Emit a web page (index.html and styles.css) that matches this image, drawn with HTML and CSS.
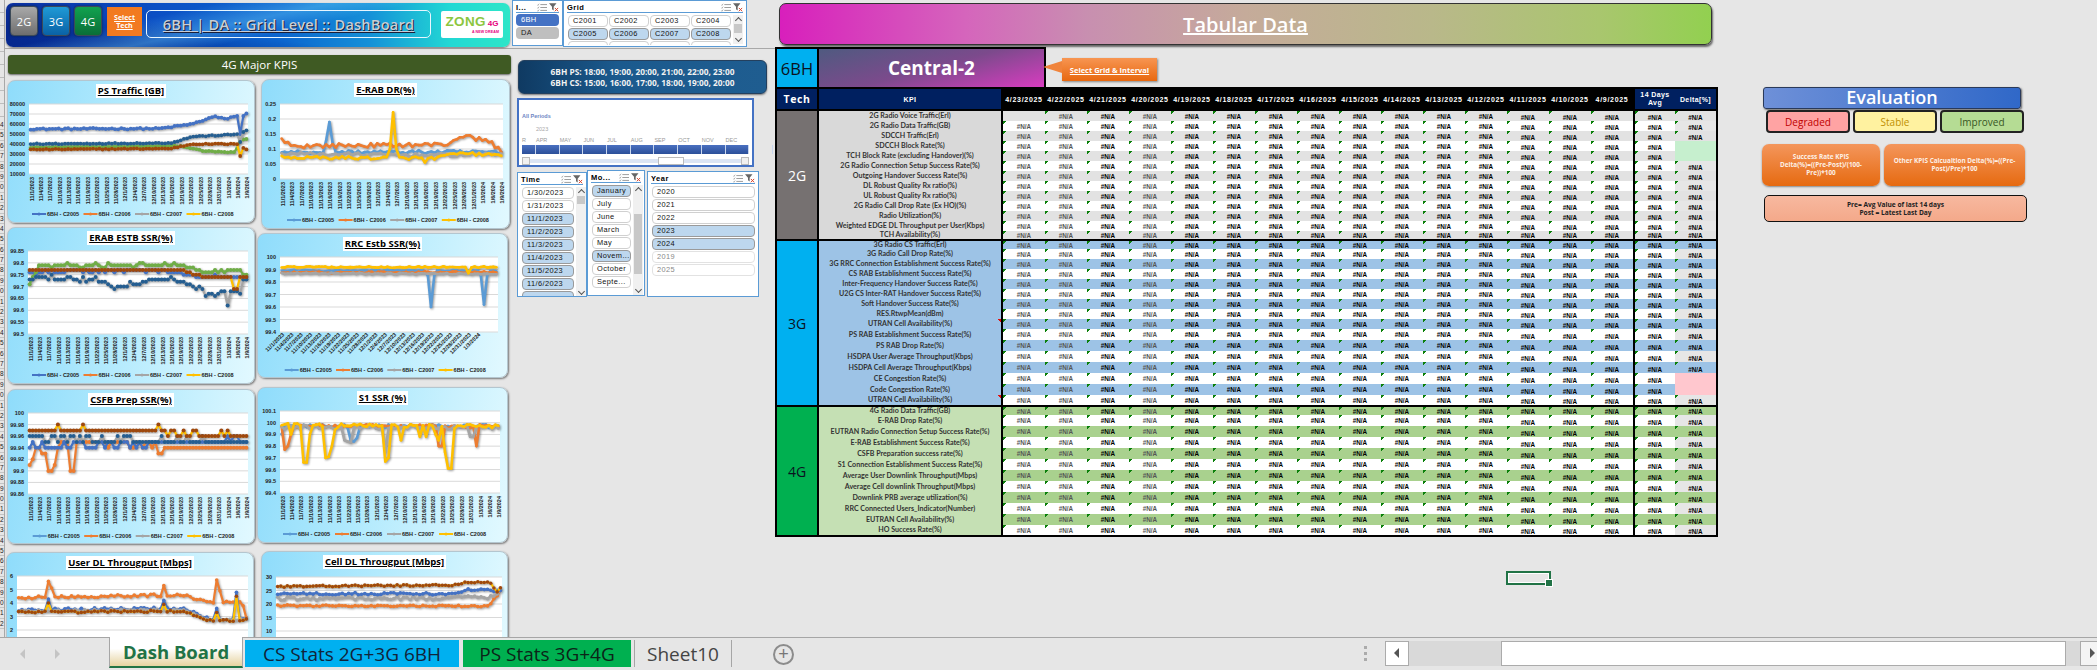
FILE: index.html
```html
<!DOCTYPE html>
<html lang="en">
<head>
<meta charset="utf-8">
<title>6BH | DA :: Grid Level :: DashBoard</title>
<link rel="stylesheet" href="styles.css">
</head>
<body>
<svg class="defs" width="0" height="0" aria-hidden="true">
  <symbol id="i-multi" viewBox="0 0 12 10">
    <path d="M4 1.5h8M4 5h8M4 8.5h8" stroke="#8a8a8a" stroke-width="1" fill="none"/>
    <path d="M0 1.5l1 1 1.6-2M0 5l1 1 1.6-2M0 8.5l1 1 1.6-2" stroke="#8a8a8a" stroke-width=".8" fill="none"/>
  </symbol>
  <symbol id="i-clear" viewBox="0 0 12 10">
    <path d="M0 0h9L5.6 4v4.5L3.6 7V4z" fill="#666"/>
    <path d="M7 5.5l4 4M11 5.5l-4 4" stroke="#d8442a" stroke-width="1.2" fill="none"/>
  </symbol>
</svg>
<div class="app">
  <div class="sheet">
    <div class="rowhead" id="rowhead"></div>
    <div class="content">
      <div class="top">
        <div class="top-left">
          <div class="banner">
            <span class="tech-btn t2">2G</span>
            <span class="tech-btn t3">3G</span>
            <span class="tech-btn t4">4G</span>
            <span class="select-tech">Select<br>Tech</span>
            <div class="banner-title"><span>6BH | DA :: Grid Level :: DashBoard</span></div>
            <div class="logo"><div class="logo-main"><span class="zong">ZONG</span><span class="z4g">4G</span></div><div class="dream">A NEW DREAM</div></div>
          </div>
          <section class="slicer s-i">
            <header class="sl-head"><span class="sl-name">I...</span><svg class="ic"><use href="#i-multi"/></svg><svg class="ic"><use href="#i-clear"/></svg></header>
            <div class="sl-stack">
              <span class="pill pill-on">6BH</span>
              <span class="pill pill-off">DA</span>
            </div>
          </section>
          <section class="slicer s-grid">
            <header class="sl-head"><span class="sl-name">Grid</span><svg class="ic"><use href="#i-multi"/></svg><svg class="ic"><use href="#i-clear"/></svg></header>
            <div class="sl-body">
              <div class="grid-btns">
                <span class="btn">C2001</span><span class="btn">C2002</span><span class="btn">C2003</span><span class="btn">C2004</span>
                <span class="btn on">C2005</span><span class="btn on">C2006</span><span class="btn on">C2007</span><span class="btn on">C2008</span>
                <span class="btn"></span><span class="btn"></span><span class="btn"></span><span class="btn"></span>
              </div>
              <div class="sl-scroll sc-grid"><i class="chev up"></i><b class="thumb"></b><i class="chev dn"></i></div>
            </div>
          </section>
        </div>
        <div class="tabular"><span>Tabular Data</span></div>
      </div>
      <div class="main">
        <div class="left">
          <div class="kpi-bar">4G Major KPIS</div>
          <div class="charts">
            <div class="col-a">
              <article class="card c1"><h3 class="card-title">PS Traffic [GB]</h3><svg class="plot" id="ch1"></svg></article>
              <article class="card c3"><h3 class="card-title">ERAB ESTB SSR(%)</h3><svg class="plot" id="ch3"></svg></article>
              <article class="card c5"><h3 class="card-title">CSFB Prep SSR(%)</h3><svg class="plot" id="ch5"></svg></article>
              <article class="card c7"><h3 class="card-title">User DL Througput [Mbps]</h3><svg class="plot" id="ch7"></svg></article>
            </div>
            <div class="col-b">
              <article class="card c2"><h3 class="card-title">E-RAB DR(%)</h3><svg class="plot" id="ch2"></svg></article>
              <article class="card c4"><h3 class="card-title">RRC Estb SSR(%)</h3><svg class="plot" id="ch4"></svg></article>
              <article class="card c6"><h3 class="card-title">S1 SSR (%)</h3><svg class="plot" id="ch6"></svg></article>
              <article class="card c8"><h3 class="card-title">Cell DL Througput [Mbps]</h3><svg class="plot" id="ch8"></svg></article>
            </div>
          </div>
        </div>
        <div class="filters">
          <div class="info">6BH PS: 18:00, 19:00, 20:00, 21:00, 22:00, 23:00<br>6BH CS: 15:00, 16:00, 17:00, 18:00, 19:00, 20:00</div>
          <div class="timeline">
            <div class="tl-all">All Periods</div>
            <div class="tl-year">2023</div>
            <div class="tl-months"><span class="m-r">R</span><span>APR</span><span>MAY</span><span>JUN</span><span>JUL</span><span>AUG</span><span>SEP</span><span>OCT</span><span>NOV</span><span>DEC</span></div>
            <div class="tl-bar"><i class="m-r"></i><i></i><i></i><i></i><i></i><i></i><i></i><i></i><i></i><i></i><i></i></div>
            <div class="tl-scroll"><b class="tl-arrow l"></b><span class="tl-track"><b class="tl-thumb"></b></span><b class="tl-arrow r"></b></div>
          </div>
          <div class="slicer-row">
            <section class="slicer s-time">
              <header class="sl-head"><span class="sl-name">Time</span><svg class="ic"><use href="#i-multi"/></svg><svg class="ic"><use href="#i-clear"/></svg></header>
              <div class="sl-body">
                <div class="sl-list">
                  <span class="btn">1/30/2023</span><span class="btn">1/31/2023</span><span class="btn on">11/1/2023</span><span class="btn on">11/2/2023</span><span class="btn on">11/3/2023</span><span class="btn on">11/4/2023</span><span class="btn on">11/5/2023</span><span class="btn on">11/6/2023</span><span class="btn on"></span>
                </div>
                <div class="sl-scroll sc-time"><i class="chev up"></i><b class="thumb"></b><i class="chev dn"></i></div>
              </div>
            </section>
            <section class="slicer s-month">
              <header class="sl-head"><span class="sl-name">Mo...</span><svg class="ic"><use href="#i-multi"/></svg><svg class="ic"><use href="#i-clear"/></svg></header>
              <div class="sl-body">
                <div class="sl-list">
                  <span class="btn on">January</span><span class="btn">July</span><span class="btn">June</span><span class="btn">March</span><span class="btn">May</span><span class="btn on">Novem...</span><span class="btn">October</span><span class="btn">Septe...</span>
                </div>
                <div class="sl-scroll sc-month"><i class="chev up"></i><b class="thumb"></b><i class="chev dn"></i></div>
              </div>
            </section>
            <section class="slicer s-year">
              <header class="sl-head"><span class="sl-name">Year</span><svg class="ic"><use href="#i-multi"/></svg><svg class="ic"><use href="#i-clear"/></svg></header>
              <div class="sl-list">
                <span class="btn">2020</span><span class="btn">2021</span><span class="btn">2022</span><span class="btn on">2023</span><span class="btn on">2024</span><span class="btn off">2019</span><span class="btn off">2025</span>
              </div>
            </section>
          </div>
        </div>
        <div class="report">
          <div class="report-top">
            <div class="cell-6bh">6BH</div>
            <div class="cell-region">Central-2</div>
            <div class="callout"><span>Select Grid &amp; Interval</span></div>
          </div>
          <div class="grid-wrap">
            <table class="kpi-table">
              <colgroup><col class="w-tech"><col class="w-kpi"><col class="w-d" span="15"><col class="w-avg"><col class="w-delta"></colgroup>
              <thead id="thead"></thead>
              <tbody id="tbody"></tbody>
            </table>
          </div>
        </div>
        <aside class="eval">
          <div class="eval-title">Evaluation</div>
          <div class="eval-legend">
            <span class="lg lg-bad">Degraded</span>
            <span class="lg lg-mid">Stable</span>
            <span class="lg lg-good">Improved</span>
          </div>
          <div class="eval-orange">
            <div class="note-o no-a">Success Rate KPIS<br>Delta(%)=((Pre-Post)/(100-<br>Pre))*100</div>
            <div class="note-o no-b">Other KPIS Calcualtion Delta(%)=((Pre-<br>Post)/Pre)*100</div>
          </div>
          <div class="eval-peach">Pre= Avg Value of last 14 days<br>Post = Latest Last Day</div>
        </aside>
      </div>
    </div>
    <div class="sel-cell"></div>
  </div>
  <footer class="tabbar">
    <div class="tab-nav"><i class="tri tl"></i><i class="tri tr"></i></div>
    <div class="tab tab-dash">Dash Board</div>
    <div class="tab tab-cs">CS Stats 2G+3G 6BH</div>
    <div class="tab tab-ps">PS Stats 3G+4G</div>
    <div class="tab tab-s10">Sheet10</div>
    <div class="tab-add">+</div>
    <div class="hscroll">
      <span class="grip"><i></i><i></i><i></i></span>
      <span class="hs-btn"><i class="tri tl dark"></i></span>
      <span class="hs-track"><b class="hs-thumb"></b></span>
      <span class="hs-btn hs-end"><i class="tri tr dark"></i></span>
    </div>
  </footer>
</div>
<script src="script.js"></script>
</body>
</html>
```
FILE: styles.css
```css
* { box-sizing: border-box; }
html, body { margin: 0; padding: 0; }
body { width: 2097px; height: 670px; overflow: hidden; background: #e6e6e6; font-family: "Open Sans", "Liberation Sans", sans-serif; }
.defs { position: absolute; }
.app { width: 2097px; height: 670px; display: flex; flex-direction: column; overflow: hidden; }
.sheet { position: relative; height: 637px; display: flex; overflow: hidden; }

/* row headers */
.rowhead { width: 5px; flex: none; border-right: 1px solid #a8a8a8; overflow: hidden; }
.rh-top { height: 120px; background: repeating-linear-gradient(#e6e6e6 0 12px, #bdbdbd 12px 13px); }
.rh { height: 10.4px; font: 6.5px/10px "Liberation Sans", sans-serif; color: #222; border-bottom: 1px solid #c4c4c4; overflow: hidden; }

.content { flex: 1; min-width: 0; display: flex; flex-direction: column; }
.top { height: 49px; flex: none; display: flex; }
.top-left { width: 770px; height: 49px; display: flex; align-items: flex-start; border-bottom: 1px solid #a8a8a8; flex: none; }

/* banner */
.banner { width: 504px; height: 44px; margin: 3px 0 0 1px; display: flex; align-items: flex-start; border-radius: 7px; flex: none; position: relative; overflow: hidden;
  background:
    linear-gradient(168deg, rgba(255,255,255,0) 30%, rgba(120,220,255,.35) 46%, rgba(255,255,255,0) 58%),
    linear-gradient(8deg, rgba(0,30,120,.45) 0 18%, rgba(0,30,120,0) 40%),
    linear-gradient(90deg, #0a2fa0 0, #0b4fc4 30%, #0c66cf 55%, #1590d8 72%, #22d8d4 88%, #2ee6c8 100%);
  box-shadow: 0 1px 2px #777; }
.tech-btn { width: 28px; height: 30px; margin-top: 3px; border-radius: 4px; display: flex; align-items: center; justify-content: center; color: #fff; font-size: 11px; border: 1px solid #3c4a58; box-shadow: 0 0 2px #123; }
.t2 { margin-left: 4px; background: linear-gradient(180deg, #a9a9a9, #6e6e6e); }
.t3 { margin-left: 4px; background: linear-gradient(180deg, #1f9ad6, #0a62a6); }
.t4 { margin-left: 4px; background: linear-gradient(180deg, #11a24f, #0a6e38); }
.select-tech { width: 35px; height: 29px; margin: 4px 0 0 5px; background: #f27a20; color: #fff; font-size: 7px; line-height: 8px; font-weight: 700; text-decoration: underline; text-align: center; display: flex; align-items: center; justify-content: center; }
.banner-title { width: 285px; height: 28px; margin: 7px 0 0 4px; border: 1px solid #e8f6ff; border-radius: 5px; display: flex; align-items: center; justify-content: center; color: #c9ced6; font-size: 14.6px; font-weight: 600; letter-spacing: .2px; }
.banner-title span { text-decoration: underline; text-shadow: 1px 1px 0 #1a1f3a; }
.logo { width: 62px; height: 27px; margin: 8px 0 0 10px; background: #fff; border-radius: 2px; display: flex; flex-direction: column; align-items: center; justify-content: center; }
.logo-main { display: flex; align-items: baseline; line-height: 13px; }
.zong { color: #8cc63f; font: 700 13.5px/13px "Liberation Sans", sans-serif; letter-spacing: .3px; }
.z4g { color: #e6007e; font: 700 8px/13px "Liberation Sans", sans-serif; margin-left: 2px; }
.dream { color: #e6007e; font: 700 3.6px/5px "Liberation Sans", sans-serif; letter-spacing: .1px; align-self: flex-end; margin-right: 4px; }

/* slicers */
.slicer { background: #fff; border: 1px solid #5b9bd5; flex: none; overflow: hidden; font-family: "Liberation Sans", sans-serif; }
.s-i { width: 51px; height: 46px; margin-left: 2px; }
.s-grid { width: 184px; height: 47px; margin-left: 0; }
.sl-head { height: 12px; margin: 0 3px; padding-top: 1px; display: flex; align-items: center; border-bottom: 1px solid #5b9bd5; }
.sl-name { flex: 1; font-size: 7.5px; font-weight: 700; letter-spacing: .5px; color: #000; white-space: nowrap; }
.ic { width: 10px; height: 9px; margin-left: 2px; flex: none; }
.sl-stack { display: flex; flex-direction: column; gap: 1px; padding: 1px 3px; }
.pill { height: 12px; border-radius: 4px; font-size: 7.5px; line-height: 12px; padding-left: 5px; letter-spacing: .3px; }
.pill-on { background: #4472c4; color: #fff; }
.pill-off { background: #bfbfbf; color: #222; }
.sl-body { display: flex; }
.grid-btns { display: grid; grid-template-columns: repeat(4, 40px); gap: 1px; padding: 2px 0 0 4px; height: 32px; overflow: hidden; align-content: start; }
.btn { height: 12px; border: 1px solid #d0d0d0; border-radius: 4px; background: #fff; font-size: 7.4px; line-height: 10px; padding-left: 4px; color: #111; letter-spacing: .4px; white-space: nowrap; overflow: hidden; flex: none; }
.btn.on { background: #bdd7ee; border-color: #9a9a9a; }
.btn.off { color: #888; border-color: #e2e2e2; }
.sl-list { display: flex; flex-direction: column; gap: 1px; padding: 2px 0 0 4px; overflow: hidden; }
.sl-scroll { width: 10px; margin: 2px 0 0 2px; background: #f0f0f0; display: flex; flex-direction: column; align-items: center; flex: none; position: relative; }
.thumb { background: #c8c8c8; width: 8px; display: block; }
.chev { width: 5px; height: 5px; display: block; border-left: 1.5px solid #555; border-top: 1.5px solid #555; flex: none; }
.chev.up { transform: rotate(45deg); margin-top: 3px; }
.chev.dn { transform: rotate(225deg); margin-top: auto; margin-bottom: 3px; }
.sc-grid { height: 29px; }
.sc-grid .thumb { height: 9px; margin-top: 1px; }
.sc-time { height: 110px; }
.sc-time .thumb { height: 8px; margin-top: 1px; }
.sc-month { height: 110px; }
.sc-month .thumb { height: 60px; margin-top: 21px; }

/* title bar */
.tabular { width: 933px; height: 42px; margin: 3px 0 0 4px; border-radius: 7px; border: 1px solid #333; box-shadow: 1px 2px 2px #666; display: flex; align-items: center; justify-content: center; color: #fff; font-size: 20px; font-weight: 600; flex: none;
  background: linear-gradient(90deg, #d81fbc 0, #d565bc 20%, #c88fb0 33%, #c5ab9a 50%, #b9b88a 70%, #a9c66e 88%, #92d050 100%); }
.tabular span { text-decoration: underline; }

.main { flex: 1; display: flex; min-height: 0; align-items: flex-start; }

/* left */
.left { width: 507px; flex: none; }
.kpi-bar { width: 503px; height: 19px; margin: 6px 0 0 3px; background: #3f5a23; border-radius: 3px; color: #fff; font-size: 11.5px; display: flex; align-items: center; justify-content: center; box-shadow: 0 1px 2px #666; }
.charts { display: flex; margin-top: 5px; }
.col-a { width: 252px; padding: 1px 0 0 2px; flex: none; }
.col-b { flex: 1; min-width: 0; }
.card { position: relative; border: 1px solid #b4c6cf; border-radius: 8px; overflow: hidden; display: flex; flex-direction: column; align-items: center; padding-top: 3px; box-shadow: 1px 1px 2px #777;
  background: linear-gradient(100deg, #8fdcfb 0, #b2eafd 45%, #e2f9ff 100%); }
.card-title { margin: 0; height: 14px; padding: 0 2px; background: #fff; color: #000; font-size: 9.5px; line-height: 14px; font-weight: 700; text-decoration: underline; white-space: nowrap; flex: none; }
.plot { display: block; flex: none; }
.c1 { width: 248px; height: 143px; }
.c3 { width: 248px; height: 157px; margin-top: 4px; }
.c5 { width: 248px; height: 155px; margin-top: 5px; }
.c7 { width: 248px; height: 95px; margin: 8px 0 0 -1px; }
.c2 { width: 249px; height: 150px; margin-left: 4px; }
.c4 { width: 251px; height: 145px; margin-top: 4px; }
.c6 { width: 251px; height: 156px; margin-top: 9px; }
.c8 { width: 247px; height: 95px; margin: 8px 0 0 4px; }
.plot text { font-family: "Liberation Sans", sans-serif; font-size: 5.5px; font-weight: 700; fill: #222; }
.plot .lines { filter: drop-shadow(1px 1px .8px rgba(0,0,0,.4)); }

/* filters */
.filters { width: 263px; flex: none; }
.info { width: 249px; height: 34px; margin: 11px 0 0 6px; border-radius: 6px; border: 1px solid #24405e; background: linear-gradient(90deg, #0f3a62, #1b5a8e 40%, #1f5d90); color: #f2f2f2; font: 700 8.3px/11.5px "Open Sans", sans-serif; text-align: center; display: flex; align-items: center; justify-content: center; box-shadow: 0 1px 2px #777; }
.timeline { width: 237px; height: 69px; margin: 4px 0 0 5px; background: #fff; border: 2px solid #4472c4; padding: 0 3px; font-family: "Liberation Sans", sans-serif; }
.tl-all { margin-top: 13px; font-size: 5.5px; line-height: 7px; color: #6d86c4; font-weight: 700; }
.tl-year { margin: 6px 0 0 14px; font-size: 5.5px; line-height: 7px; color: #a8a8a8; }
.tl-months { display: flex; height: 9px; margin-top: 3px; font-size: 5.5px; line-height: 8px; color: #999; }
.tl-months span { width: 23.7px; flex: none; }
.tl-months .m-r { width: 14px; }
.tl-bar { display: flex; height: 9px; background: linear-gradient(180deg, #4a70c0, #2b4f99); }
.tl-bar i { width: 23.7px; flex: none; border-right: 1px solid #c8d6ee; }
.tl-bar .m-r { width: 14px; }
.tl-scroll { display: flex; height: 9px; margin-top: 2px; align-items: center; }
.tl-arrow { width: 8px; height: 8px; background: #f0f0f0; border: 1px solid #bbb; flex: none; }
.tl-track { flex: 1; height: 4px; background: #dbe4f3; position: relative; }
.tl-thumb { position: absolute; left: 128px; top: -2px; width: 26px; height: 8px; background: #fff; border: 1px solid #bbb; }
.slicer-row { display: flex; align-items: flex-start; margin: 3px 0 0 5px; }
.s-time { width: 70px; height: 125px; margin-top: 2px; }
.s-month { width: 58px; height: 126px; margin-top: 0; }
.s-year { width: 112px; height: 126px; margin: 1px 0 0 2px; }
.s-time .btn { width: 52px; }
.s-month .btn { width: 39px; }
.s-year .btn { width: 103px; }

/* report */
.report { width: 943px; margin: -2px 0 0 0; flex: none; }
.report-top { display: flex; height: 40px; align-items: flex-start; }
.cell-6bh { width: 44px; height: 40px; background: #00b0f0; border: 2px solid #000; border-bottom: 0; color: #0b1220; font-size: 16.5px; display: flex; align-items: center; justify-content: center; flex: none; }
.cell-region { width: 227px; height: 40px; border-top: 2px solid #000; border-right: 2px solid #000; background: linear-gradient(165deg, #4f5a80 0, #7c4a8c 50%, #d83cc0 100%); color: #fff; font-size: 19px; font-weight: 700; display: flex; align-items: center; justify-content: center; flex: none; }
.callout { position: relative; width: 95px; height: 23px; margin: 11px 0 0 16px; background: linear-gradient(180deg, #f79552, #e8680f); color: #fff; font-size: 7.5px; font-weight: 700; display: flex; align-items: center; justify-content: center; box-shadow: 1px 1px 2px #888; flex: none; }
.callout span { text-decoration: underline; white-space: nowrap; }
.callout::before { content: ""; position: absolute; left: -19px; top: 3px; width: 19px; height: 12px; background: #f0843c; clip-path: polygon(0 50%, 100% 0, 100% 100%); }
.grid-wrap { width: 943px; border: 2px solid #000; border-top: 0; background: #e6e6e6; }
.kpi-table { width: 939px; table-layout: fixed; border-collapse: separate; border-spacing: 0; font-family: "Liberation Sans", sans-serif; }
.w-tech { width: 42px; } .w-kpi { width: 184px; } .w-d { width: 42px; } .w-avg { width: 42px; } .w-delta { width: 41px; }
.kpi-table th, .kpi-table td { padding: 0; overflow: hidden; white-space: nowrap; }
.kpi-table thead th { height: 24px; background: #000; color: #fff; border-top: 2px solid #000; border-bottom: 2px solid #000; font-size: 7px; font-weight: 700; letter-spacing: .7px; text-align: center; }
.kpi-table thead .navy { background: #002060; letter-spacing: .4px; }
.kpi-table thead .th-tech { font: 700 10.5px "Open Sans", sans-serif; letter-spacing: .6px; border-right: 2px solid #000; }
.kpi-table thead .th-kpi { border-right: 2px solid #000; }
.kpi-table thead .th-avg { border-left: 2px solid #000; line-height: 8.5px; }
.tech { border-right: 2px solid #000; text-align: center; font: 400 14px "Open Sans", sans-serif; color: #0b1220; }
.g2 .tech { background: #767171; color: #fff; }
.g3 .tech { background: #00b0f0; }
.g4 .tech { background: #00b050; }
.kpi { border-right: 2px solid #000; text-align: center; font-family: Lato, "Liberation Sans", sans-serif; font-size: 7.1px; line-height: 8px; font-weight: 700; color: #333; }
.g2 .kpi { background: #d9d9d9; }
.g3 .kpi { background: #9dc3e6; }
.g4 .kpi { background: #c5e0b4; }
.kpi.noted { background-image: linear-gradient(225deg, #e01010 2.2px, transparent 2.2px); }
.r10 td { height: 10px; }
.r11 td { height: 11px; }
.r8 td { height: 8px; }
.sec td { border-top: 2px solid #000; }
.v { text-align: center; font-size: 6.3px; line-height: 7px; font-weight: 700; color: #000; background-color: #fff; vertical-align: middle; }
.v.soft { color: #555; }
.v.lo { vertical-align: bottom; }
.v.flag { background-image: linear-gradient(135deg, #0a800a 2.7px, transparent 2.7px); }
.g2.band .v { background-color: #e2e2e2; }
.g3.band .v { background-color: #9dc3e6; }
.g4.band .v { background-color: #a9d18e; }
.avg { border-left: 2px solid #000; }
.kpi-table tr .delta { background-color: #e6e6e6; }
.kpi-table tr .delta.ok { background-color: #c6efce; }
.kpi-table tr .delta.no { background-color: #ffc7ce; }

/* evaluation */
.eval { width: 266px; margin: 38px 0 0 44px; flex: none; }
.eval-title { width: 258px; height: 22px; margin-left: 1px; border: 1px solid #2a3a5a; border-radius: 3px; background: linear-gradient(90deg, #6e90d8, #3068c8); color: #fff; font-size: 18px; font-weight: 600; line-height: 19px; text-align: center; box-shadow: 1px 1px 2px #666; }
.eval-legend { display: flex; gap: 3px; margin: 1px 0 0 4px; }
.lg { width: 84px; height: 23px; border: 2px solid #222; border-radius: 4px; font-size: 10px; display: flex; align-items: center; justify-content: center; }
.lg-bad { background: #ffa3a3; color: #c00000; }
.lg-mid { background: #fff2a0; color: #bf9000; }
.lg-good { background: #b5dc94; color: #385723; }
.eval-orange { display: flex; gap: 4px; margin-top: 11px; }
.note-o { height: 42px; border-radius: 7px; background: linear-gradient(180deg, #f4965c, #e66a10); color: #fdf0e6; font-size: 6.4px; line-height: 8px; font-weight: 700; display: flex; align-items: center; justify-content: center; text-align: center; box-shadow: 0 1px 2px #888; white-space: nowrap; }
.no-a { width: 118px; }
.no-b { width: 141px; }
.eval-peach { width: 263px; height: 27px; margin: 9px 0 0 2px; border: 1px solid #111; border-radius: 5px; background: linear-gradient(180deg, #f7b89f, #f4a98a); color: #222; font-size: 6.6px; line-height: 8px; font-weight: 700; text-align: center; display: flex; align-items: center; justify-content: center; }

.sel-cell { position: absolute; left: 1506px; top: 571px; width: 45px; height: 14px; border: 2px solid #217346; box-shadow: inset 0 0 0 1px #fff; }
.sel-cell::after { content: ""; position: absolute; right: -3px; bottom: -3px; width: 6px; height: 6px; background: #217346; outline: 1px solid #fff; }

/* tab bar */
.tabbar { height: 33px; flex: none; display: flex; align-items: flex-start; border-top: 1px solid #a6a6a6; background: #e6e6e6; font-family: "Open Sans", "Liberation Sans", sans-serif; position: relative; }
.tab-nav { width: 109px; height: 32px; flex: none; position: relative; }
.tri { position: absolute; width: 0; height: 0; border-top: 5px solid transparent; border-bottom: 5px solid transparent; }
.tri.tl { border-right: 5px solid #c4c4c4; }
.tri.tr { border-left: 5px solid #c4c4c4; }
.tab-nav .tl { left: 20px; top: 11px; }
.tab-nav .tr { left: 55px; top: 11px; }
.tab { font-size: 19px; white-space: nowrap; display: flex; align-items: center; justify-content: center; flex: none; }
.tab-dash { width: 134px; height: 31px; margin-top: -1px; border-left: 1px solid #a6a6a6; border-right: 1px solid #a6a6a6; border-bottom: 2px solid #217346; background: linear-gradient(180deg, #fff 0, #fff 40%, #e6d3a0 100%); color: #217346; font-weight: 700; font-size: 18.5px; }
.tab-cs { width: 214px; height: 27px; margin: 2px 0 0 2px; background: #00b0f0; color: #12243a; }
.tab-ps { width: 168px; height: 27px; margin: 2px 0 0 4px; background: #00b050; color: #0c2418; border-right: 0; }
.tab-s10 { width: 98px; height: 27px; margin: 2px 0 0 3px; color: #444; border-left: 1px solid #a6a6a6; border-right: 1px solid #a6a6a6; }
.tab-add { width: 21px; height: 21px; margin: 6px 0 0 41px; border: 2px solid #8c8c8c; border-radius: 50%; color: #777; font: 400 18px/16px "Liberation Sans", sans-serif; text-align: center; flex: none; }
.hscroll { display: flex; align-items: center; height: 25px; margin: 3px 0 0 0; position: absolute; left: 1362px; right: 0; top: 0; }
.grip { width: 23px; display: flex; flex-direction: column; gap: 3px; flex: none; padding-left: 2px; }
.grip i { width: 3px; height: 3px; background: #ababab; }
.hs-btn { width: 24px; height: 25px; border: 1px solid #ababab; background: #fff; position: relative; flex: none; }
.hs-btn .tl { left: 8px; top: 6px; }
.hs-btn .tr { left: 9px; top: 6px; }
.tri.dark.tl { border-right-color: #555; }
.tri.dark.tr { border-left-color: #555; }
.hs-end { width: 17px; border-right: 0; background: #f4f4f4; }
.hs-track { flex: 1; height: 25px; background: #d9d9d9; padding-left: 92px; padding-right: 14px; }
.hs-thumb { display: block; height: 25px; background: #fff; border: 1px solid #ababab; }
```
FILE: script.js
```javascript
// Builds the repetitive parts of the workbook view: row headers, KPI table and chart plots.
(function () {
  // row header strip
  var rh = '<div class="rh-top"></div>';
  for (var r = 0; r < 49; r++) rh += '<div class="rh">' + ((r + 4) % 10) + '</div>';
  document.getElementById('rowhead').innerHTML = rh;

  // KPI table
  var dates = ['4/23/2025','4/22/2025','4/21/2025','4/20/2025','4/19/2025','4/18/2025','4/17/2025','4/16/2025','4/15/2025','4/14/2025','4/13/2025','4/12/2025','4/11/2025','4/10/2025','4/9/2025'];
  var soft = { 0: 1, 1: 1, 3: 1 };
  var head = '<tr><th class="navy th-tech">Tech</th><th class="navy th-kpi">KPI</th>';
  dates.forEach(function (d) { head += '<th>' + d + '</th>'; });
  head += '<th class="navy th-avg">14 Days<br>Avg</th><th class="navy">Delta[%]</th></tr>';
  document.getElementById('thead').innerHTML = head;

  var sections = [
    { key: 'g2', name: '2G', rows: ['2G Radio Voice Traffic(Erl)','2G Radio Data Traffic(GB)','SDCCH Traffic(Erl)','SDCCH Block Rate(%)','TCH Block Rate (excluding Handover)(%)','2G Radio Connection Setup Success Rate(%)','Outgoing Handover Success Rate(%)','DL Robust Quality Rx ratio(%)','UL Robust Quality Rx ratio(%)','2G Radio Call Drop Rate (Ex HO)(%)','Radio Utilization(%)','Weighted EDGE DL Throughput per User(Kbps)','TCH Availability(%)'],
      h: [10,10,10,10,10,10,10,10,10,10,10,10,8], ok: { 3: 1, 4: 1 } },
    { key: 'g3', name: '3G', rows: ['3G Radio CS Traffic(Erl)','3G Radio Call Drop Rate(%)','3G RRC Connection Establishment Success Rate(%)','CS RAB Establishment Success Rate(%)','Inter-Frequency Handover Success Rate(%)','U2G CS Inter-RAT Handover Success Rate(%)','Soft Handover Success Rate(%)','RES.RtwpMean(dBm)','UTRAN Cell Availability(%)','PS RAB Establishment Success Rate(%)','PS RAB Drop Rate(%)','HSDPA User Average Throughput(Kbps)','HSDPA Cell Average Throughput(Kbps)','CE Congestion Rate(%)','Code Congestion Rate(%)','UTRAN Cell Availability(%)'],
      h: [10,10,10,10,10,10,10,10,10,11,11,11,11,11,11,10], no: { 13: 1, 14: 1 }, noted: { 8: 1, 15: 1 } },
    { key: 'g4', name: '4G', rows: ['4G Radio Data Traffic(GB)','E-RAB Drop Rate(%)','EUTRAN Radio Connection Setup Success Rate(%)','E-RAB Establishment Success Rate(%)','CSFB Preparation success rate(%)','S1 Connection Establishment Success Rate(%)','Average User Downlink Throughput(Mbps)','Average Cell downlink Throughput(Mbps)','Downlink PRB average utilization(%)','RRC Connected Users_Indicator(Number)','EUTRAN Cell Availability(%)','HO Success Rate(%)'],
      h: [10,11,11,11,11,11,11,11,11,11,11,10] }
  ];
  var body = '';
  sections.forEach(function (s, si) {
    s.rows.forEach(function (name, i) {
      var cls = s.key + ' r' + s.h[i] + (i % 2 === 0 ? ' band' : '') + (i === 0 && si > 0 ? ' sec' : '');
      body += '<tr class="' + cls + '">';
      if (i === 0) body += '<td class="tech" rowspan="' + s.rows.length + '">' + s.name + '</td>';
      body += '<td class="kpi' + (s.noted && s.noted[i] ? ' noted' : '') + '">' + name + '</td>';
      for (var c = 0; c < 15; c++) {
        var blank = si === 0 && i === 0 && c === 0;
        body += '<td class="v' + (soft[c] ? ' soft' : '') + (c >= 12 ? ' lo' : '') + (blank ? '' : ' flag') + '">' + (blank ? '' : '#N/A') + '</td>';
      }
      body += '<td class="v avg flag lo">#N/A</td>';
      var isOk = s.ok && s.ok[i], isNo = s.no && s.no[i];
      if (isOk) body += '<td class="v delta ok"></td>';
      else if (isNo) body += '<td class="v delta no"></td>';
      else body += '<td class="v delta flag lo">#N/A</td>';
      body += '</tr>';
    });
  });
  document.getElementById('tbody').innerHTML = body;

  // charts
  var seed = 12345;
  function rnd() { seed = (seed * 1664525 + 1013904223) % 4294967296; return seed / 4294967296; }
  var N = 70;
  var xl = ['11/1/2023','11/4/2023','11/7/2023','11/10/2023','11/13/2023','11/16/2023','11/19/2023','11/22/2023','11/25/2023','11/28/2023','12/1/2023','12/4/2023','12/7/2023','12/10/2023','12/13/2023','12/16/2023','12/19/2023','12/22/2023','12/25/2023','12/28/2023','12/31/2023','1/3/2024','1/6/2024','1/9/2024'];
  var BL = '#4472c4', LB = '#5b9bd5', OR = '#ed7d31', GR = '#a5a5a5', YE = '#ffc000', GN = '#70ad47', NV = '#255e91', BR = '#9e480e';
  var LEG = ['6BH - C2005', '6BH - C2006', '6BH - C2007', '6BH - C2008'];

  function values(s) {
    var out = [];
    for (var i = 0; i < N; i++) {
      var t = i / (N - 1), k = s.k, v = k[k.length - 1][1];
      for (var j = 0; j < k.length - 1; j++) {
        if (t >= k[j][0] && t <= k[j + 1][0]) {
          v = k[j][1] + (k[j + 1][1] - k[j][1]) * (t - k[j][0]) / (k[j + 1][0] - k[j][0]);
          break;
        }
      }
      v += (rnd() - .5) * (s.n || 0);
      if (s.q) v = Math.round(v / s.q) * s.q;
      if (s.s && s.s[i] !== undefined) v = s.s[i];
      out.push(v);
    }
    return out;
  }

  var charts = [
    { id: 'ch1', x: 7, y: 80, w: 248, h: 143, px: [29, 248], py: [104, 174], min: 10000, max: 80000, yl: ['80000','70000','60000','50000','40000','30000','20000','10000'], lx: [32, 51.5], ly: 214, lc: [BL, OR, GR, YE], ms: 1.9, sw: 2.2,
      s: [
        { c: BL, m: BL, k: [[0,55000],[.6,55500],[.75,60000],[.85,67500],[.9,65000],[1,71000]], n: 1500, s: { 67: 50000, 68: 68000 } },
        { c: GN, m: GN, k: [[0,36500],[.7,38000],[.8,33000],[.95,31500],[.97,44000],[1,45000]], n: 800 },
        { c: GR, m: NV, k: [[0,40000],[.65,41000],[.75,47500],[.95,49500],[1,53500]], n: 1000, s: { 67: 42000 } },
        { c: YE, m: BR, k: [[0,34500],[.65,35500],[.75,40000],[.95,40000],[1,35000]], n: 1000, s: { 67: 28000 } }
      ] },
    { id: 'ch2', x: 263, y: 79, w: 249, h: 150, px: [282, 505], py: [104, 179], min: 0, max: .25, yl: ['0.25','0.2','0.15','0.1','0.05','0'], lx: [289, 51.6], ly: 220, lc: [LB, OR, GR, YE], ms: 1.3, sw: 2.6,
      s: [
        { c: LB, m: LB, k: [[0,.09],[1,.09]], n: .012, s: { 14: .13, 15: .19, 16: .12 } },
        { c: OR, m: OR, k: [[0,.135],[.05,.11],[.75,.115],[.82,.145],[.95,.125],[1,.09]], n: .014 },
        { c: GR, m: GR, k: [[0,.085],[.6,.08],[.8,.08],[1,.085]], n: .012 },
        { c: YE, m: YE, k: [[0,.072],[.45,.07],[.7,.07],[.8,.085],[1,.08]], n: .01, s: { 34: .1, 35: .222, 36: .1, 45: .055 } }
      ] },
    { id: 'ch3', x: 7, y: 227, w: 248, h: 157, px: [28, 248], py: [251, 334], min: 99.5, max: 99.85, yl: ['99.85','99.8','99.75','99.7','99.65','99.6','99.55','99.5'], lx: [32, 51.5], ly: 375, lc: [BL, OR, GR, YE], ms: 2, sw: 2.2,
      s: [
        { c: BL, m: BL, k: [[0,99.76],[.6,99.77],[.8,99.74],[1,99.74]], n: .012, q: .01 },
        { c: GN, m: GN, k: [[0,99.71],[.04,99.79],[.7,99.79],[.8,99.76],[.95,99.77],[1,99.75]], n: .014, q: .01 },
        { c: GR, m: NV, k: [[0,99.74],[.3,99.73],[.4,99.7],[.6,99.73],[.72,99.72],[.82,99.67],[1,99.68]], n: .02, q: .01, s: { 63: 99.62, 68: 99.73, 69: 99.73 } },
        { c: YE, m: BR, k: [[0,99.77],[.7,99.77],[.8,99.74],[1,99.74]], n: .01, q: .01, s: { 65: 99.69, 66: 99.69 } }
      ] },
    { id: 'ch4', x: 259, y: 233, w: 251, h: 145, px: [282, 500], py: [257, 332], min: 99.4, max: 100, yl: ['100','99.9','99.8','99.7','99.6','99.5','99.4'], lx: [286.7, 51.3], ly: 370, lc: [LB, OR, GR, YE], rot: 45, xcount: 22, ms: 1.3, sw: 2.6,
      s: [
        { c: LB, m: LB, k: [[0,99.89],[1,99.89]], n: .012, s: { 47: 99.85, 48: 99.6, 49: 99.85, 64: 99.85, 65: 99.62, 66: 99.85 } },
        { c: OR, m: OR, k: [[0,99.875],[1,99.88]], n: .012 },
        { c: GR, m: GR, k: [[0,99.87],[1,99.865]], n: .012 },
        { c: YE, m: YE, k: [[0,99.92],[1,99.92]], n: .012, s: { 60: 99.87 } }
      ] },
    { id: 'ch5', x: 7, y: 389, w: 248, h: 155, px: [28, 248], py: [413, 494], min: 99.86, max: 100, yl: ['100','99.98','99.96','99.94','99.92','99.9','99.88','99.86'], lx: [32.7, 51.5], ly: 536, lc: [LB, OR, GR, YE], ms: 2, sw: 2.2,
      s: [
        { c: OR, m: OR, k: [[0,99.91],[.04,99.94],[.1,99.92],[.15,99.95],[.55,99.945],[.62,99.94],[1,99.94]], n: .008, q: .01, s: { 6: 99.9, 7: 99.9, 8: 99.91, 13: 99.9, 14: 99.9, 41: 99.93, 42: 99.93 } },
        { c: BL, m: BL, k: [[0,99.94],[1,99.955]], n: .012, q: .01 },
        { c: GR, m: NV, k: [[0,99.955],[1,99.95]], n: .01, q: .01 },
        { c: YE, m: BR, k: [[0,99.97],[.5,99.97],[.7,99.965],[1,99.96]], n: .008, q: .01, s: { 9: 99.98, 17: 99.98, 41: 99.98 } }
      ] },
    { id: 'ch6', x: 259, y: 387, w: 251, h: 156, px: [282, 502], py: [411, 493], min: 99.4, max: 100.1, yl: ['100.1','100','99.9','99.8','99.7','99.6','99.5','99.4'], lx: [285, 52], ly: 534, lc: [LB, OR, GR, YE], ms: 1.3, sw: 2.6,
      s: [
        { c: LB, m: LB, k: [[0,99.97],[1,99.97]], n: .03, s: { 0: 99.9, 22: 99.85, 23: 99.84, 24: 99.87 } },
        { c: OR, m: OR, k: [[0,99.97],[1,99.97]], n: .03, s: { 1: 99.77, 2: 99.8, 3: 99.9, 50: 99.8, 51: 99.8, 62: 99.8 } },
        { c: GR, m: GR, k: [[0,99.96],[1,99.96]], n: .04, s: { 20: 99.85, 21: 99.84, 22: 99.83, 33: 99.75, 60: 99.88, 61: 99.88 } },
        { c: YE, m: YE, k: [[0,99.98],[1,99.97]], n: .03, s: { 3: 99.9, 7: 99.66, 8: 99.66, 9: 99.9, 14: 99.7, 15: 99.71, 16: 99.8, 17: 99.94, 33: 99.67, 34: 99.7, 38: 99.85, 44: 99.88, 46: 99.88, 49: 99.9, 50: 99.85, 52: 99.75, 53: 99.61, 54: 99.61, 55: 99.95 } }
      ] },
    { id: 'ch7', x: 6, y: 552, w: 248, h: 95, px: [17, 248], py: [576, 657], min: 0, max: 6, yl: ['6','5','4','3','2','',''], cut: true, ms: 1.8, sw: 2.2,
      s: [
        { c: OR, m: OR, k: [[0,4.4],[.72,4.6],[.82,4.1],[.98,4.1],[1,2.9]], n: .2, s: { 9: 5.6, 10: 5.1, 44: 5.3, 60: 5.7, 61: 4.9 } },
        { c: BL, m: BL, k: [[0,3.5],[.72,3.6],[.85,2.75],[1,2.9]], n: .2, s: { 9: 4.3, 44: 4.2, 60: 3.6, 66: 4.8 } },
        { c: GR, m: GR, k: [[0,3.4],[.72,3.5],[.85,2.7],[1,2.8]], n: .16 },
        { c: YE, m: BR, k: [[0,3.3],[.72,3.4],[.85,2.65],[1,2.75]], n: .16, s: { 9: 4, 44: 3.9, 60: 3.3, 66: 4.5 } }
      ] },
    { id: 'ch8', x: 263, y: 551, w: 247, h: 95, px: [278, 504], py: [577, 658], min: 0, max: 30, yl: ['30','25','20','15','10','',''], cut: true, ms: 1.8, sw: 2.2,
      s: [
        { c: OR, m: OR, k: [[0,19.4],[.95,19.2],[1,25]], n: .6 },
        { c: GR, m: GR, k: [[0,22],[.8,22.2],[.9,23],[.95,22.5],[1,25]], n: 1.3 },
        { c: BL, m: BL, k: [[0,23.8],[.8,23.8],[.85,25.3],[.95,25],[1,25]], n: .9 },
        { c: YE, m: BR, k: [[0,26.5],[.8,27],[.85,28.2],[.96,28],[.98,24],[1,26]], n: .6 }
      ] }
  ];

  charts.forEach(function (ch) {
    var el = document.getElementById(ch.id);
    var vw = ch.w - 2, vh = ch.h - 19;
    el.setAttribute('width', vw);
    el.setAttribute('height', vh);
    el.setAttribute('viewBox', (ch.x + 1) + ' ' + (ch.y + 18) + ' ' + vw + ' ' + vh);
    var x0 = ch.px[0], x1 = ch.px[1], y0 = ch.py[0], y1 = ch.py[1];
    var o = '<rect x="' + x0 + '" y="' + y0 + '" width="' + (x1 - x0) + '" height="' + (y1 - y0) + '" fill="#fff"/>';
    ch.yl.forEach(function (lab, i) {
      var y = y0 + (y1 - y0) * i / (ch.yl.length - 1);
      o += '<path d="M' + x0 + ' ' + y + 'H' + x1 + '" stroke="#d9d9d9" stroke-width="1" fill="none"/>';
      if (lab) o += '<text x="' + (x0 - 4) + '" y="' + (y + 2) + '" text-anchor="end">' + lab + '</text>';
    });
    if (!ch.cut) {
      xl.slice(0, ch.xcount || xl.length).forEach(function (lab, i) {
        var x = x0 + (i * 3 + .5) * (x1 - x0) / N + 1;
        var ang = ch.rot ? -45 : -90;
        o += '<text transform="translate(' + (x + 2) + ' ' + (y1 + 3) + ') rotate(' + ang + ')" text-anchor="end">' + lab + '</text>';
      });
    }
    o += '<g class="lines">';
    ch.s.forEach(function (s) {
      var vals = values(s), pts = [], dots = '';
      vals.forEach(function (v, i) {
        var px = x0 + (i + .5) * (x1 - x0) / N;
        var py = y0 + (ch.max - v) / (ch.max - ch.min) * (y1 - y0);
        pts.push(px.toFixed(1) + ',' + py.toFixed(1));
        dots += '<circle cx="' + px.toFixed(1) + '" cy="' + py.toFixed(1) + '" r="' + ch.ms + '"/>';
      });
      o += '<polyline points="' + pts.join(' ') + '" fill="none" stroke="' + s.c + '" stroke-width="' + ch.sw + '" stroke-linejoin="round"/>';
      o += '<g fill="' + s.m + '">' + dots + '</g>';
    });
    o += '</g>';
    if (!ch.cut) {
      LEG.forEach(function (t, i) {
        var lx = ch.lx[0] + ch.lx[1] * i;
        o += '<path d="M' + lx + ' ' + ch.ly + 'h14" stroke="' + ch.lc[i] + '" stroke-width="2" fill="none"/>';
        o += '<circle cx="' + (lx + 7) + '" cy="' + ch.ly + '" r="1.5" fill="' + ch.lc[i] + '"/>';
        o += '<text x="' + (lx + 15) + '" y="' + (ch.ly + 2) + '">' + t + '</text>';
      });
    }
    el.innerHTML = o;
  });
})();
```
